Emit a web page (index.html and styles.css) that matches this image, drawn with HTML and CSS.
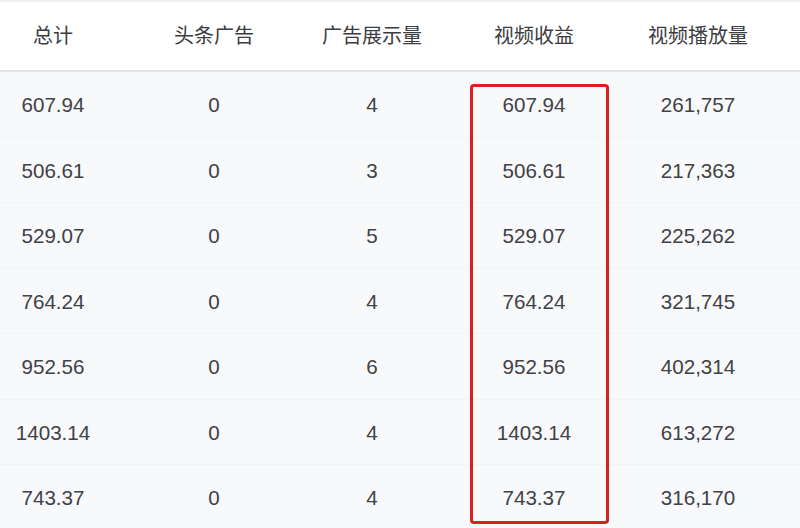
FILE: index.html
```html
<!DOCTYPE html>
<html lang="zh">
<head>
<meta charset="utf-8">
<link rel="stylesheet" href="styles.css">
</head>
<body>
<div class="page">
  <div class="table">
    <div class="row head">
      <div class="cell">总计</div>
      <div class="cell">头条广告</div>
      <div class="cell">广告展示量</div>
      <div class="cell">视频收益</div>
      <div class="cell">视频播放量</div>
    </div>
    <div class="row">
      <div class="cell">607.94</div><div class="cell">0</div><div class="cell">4</div><div class="cell">607.94</div><div class="cell">261,757</div>
    </div>
    <div class="row">
      <div class="cell">506.61</div><div class="cell">0</div><div class="cell">3</div><div class="cell">506.61</div><div class="cell">217,363</div>
    </div>
    <div class="row">
      <div class="cell">529.07</div><div class="cell">0</div><div class="cell">5</div><div class="cell">529.07</div><div class="cell">225,262</div>
    </div>
    <div class="row">
      <div class="cell">764.24</div><div class="cell">0</div><div class="cell">4</div><div class="cell">764.24</div><div class="cell">321,745</div>
    </div>
    <div class="row">
      <div class="cell">952.56</div><div class="cell">0</div><div class="cell">6</div><div class="cell">952.56</div><div class="cell">402,314</div>
    </div>
    <div class="row">
      <div class="cell">1403.14</div><div class="cell">0</div><div class="cell">4</div><div class="cell">1403.14</div><div class="cell">613,272</div>
    </div>
    <div class="row">
      <div class="cell">743.37</div><div class="cell">0</div><div class="cell">4</div><div class="cell">743.37</div><div class="cell">316,170</div>
    </div>
  </div>
  <div class="highlight"></div>
</div>
</body>
</html>
```

FILE: styles.css
```css
html, body {
  margin: 0;
  padding: 0;
  background: #ffffff;
}
.page {
  position: relative;
  width: 800px;
  height: 528px;
  overflow: hidden;
  background: #f8f9fb;
  font-family: "Liberation Sans", Arial, "Noto Sans CJK SC", sans-serif;
  color: #414146;
}
.table {
  display: flex;
  flex-direction: column;
  margin-left: -28px;
}
.row {
  display: grid;
  grid-template-columns: 162px 160px 156px 168px 160px;
  height: 65.5px;
  flex-shrink: 0;
  align-items: center;
  padding-top: 2px;
  background: #f8f9fb;
  border-bottom: 1px solid #f3f4f6;
  box-sizing: border-box;
  font-size: 20.6px;
  width: 828px;
}
.row.head {
  height: 72px;
  padding-top: 0;
  background: #ffffff;
  border-top: 2px solid #f0f0f0;
  border-bottom: 2px solid #e2e3e5;
  font-family: "Noto Sans CJK SC", "Liberation Sans", sans-serif;
  font-size: 20px;
  color: #3c3d42;
  padding-bottom: 4px;
}
.cell {
  text-align: center;
  white-space: nowrap;
}
.highlight {
  position: absolute;
  left: 470px;
  top: 84px;
  width: 139px;
  height: 440px;
  box-sizing: border-box;
  border: 3.5px solid #dc1f1d;
  border-radius: 4px;
}
```
